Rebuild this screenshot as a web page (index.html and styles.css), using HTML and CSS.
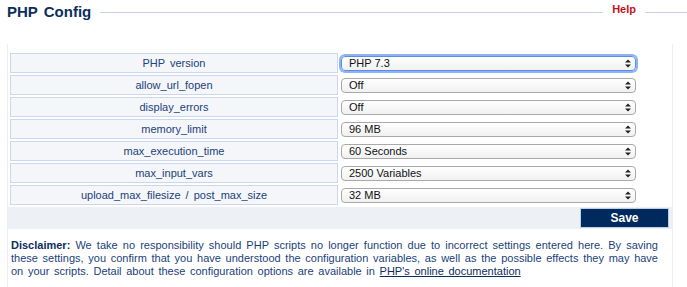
FILE: index.html
```html
<!DOCTYPE html>
<html lang="en">

<head>
    <meta charset="UTF-8">
    <meta name="viewport" content="width=device-width, initial-scale=1.0">
    <title>PHP Config</title>
    <link rel="stylesheet" href="styles.css">
</head>

<body>
    <!-- 상단 제목 -->
    <div class="page-head">
        <h1 class="page-title">PHP Config</h1>
        <span class="head-line"></span>
        <a class="help-link" href="#">Help</a>
        <span class="head-line head-line-end"></span>
    </div>

    <div class="config-box">
        <form class="config-form">
            <table class="config-table">
                <tr>
                    <td class="config-label">PHP version</td>
                    <td class="config-value">
                        <div class="select-wrap focused">
                            <select><option>PHP 7.3</option></select>
                            <svg class="select-arrow" width="6" height="9" viewBox="0 0 6 9"><path d="M0 3.5L3 0.5L6 3.5ZM0 5.5L3 8.5L6 5.5Z" fill="#222"/></svg>
                        </div>
                    </td>
                </tr>
                <tr>
                    <td class="config-label">allow_url_fopen</td>
                    <td class="config-value">
                        <div class="select-wrap">
                            <select><option>Off</option></select>
                            <svg class="select-arrow" width="6" height="9" viewBox="0 0 6 9"><path d="M0 3.5L3 0.5L6 3.5ZM0 5.5L3 8.5L6 5.5Z" fill="#222"/></svg>
                        </div>
                    </td>
                </tr>
                <tr>
                    <td class="config-label">display_errors</td>
                    <td class="config-value">
                        <div class="select-wrap">
                            <select><option>Off</option></select>
                            <svg class="select-arrow" width="6" height="9" viewBox="0 0 6 9"><path d="M0 3.5L3 0.5L6 3.5ZM0 5.5L3 8.5L6 5.5Z" fill="#222"/></svg>
                        </div>
                    </td>
                </tr>
                <tr>
                    <td class="config-label">memory_limit</td>
                    <td class="config-value">
                        <div class="select-wrap">
                            <select><option>96 MB</option></select>
                            <svg class="select-arrow" width="6" height="9" viewBox="0 0 6 9"><path d="M0 3.5L3 0.5L6 3.5ZM0 5.5L3 8.5L6 5.5Z" fill="#222"/></svg>
                        </div>
                    </td>
                </tr>
                <tr>
                    <td class="config-label">max_execution_time</td>
                    <td class="config-value">
                        <div class="select-wrap">
                            <select><option>60 Seconds</option></select>
                            <svg class="select-arrow" width="6" height="9" viewBox="0 0 6 9"><path d="M0 3.5L3 0.5L6 3.5ZM0 5.5L3 8.5L6 5.5Z" fill="#222"/></svg>
                        </div>
                    </td>
                </tr>
                <tr>
                    <td class="config-label">max_input_vars</td>
                    <td class="config-value">
                        <div class="select-wrap">
                            <select><option>2500 Variables</option></select>
                            <svg class="select-arrow" width="6" height="9" viewBox="0 0 6 9"><path d="M0 3.5L3 0.5L6 3.5ZM0 5.5L3 8.5L6 5.5Z" fill="#222"/></svg>
                        </div>
                    </td>
                </tr>
                <tr>
                    <td class="config-label">upload_max_filesize / post_max_size</td>
                    <td class="config-value">
                        <div class="select-wrap">
                            <select><option>32 MB</option></select>
                            <svg class="select-arrow" width="6" height="9" viewBox="0 0 6 9"><path d="M0 3.5L3 0.5L6 3.5ZM0 5.5L3 8.5L6 5.5Z" fill="#222"/></svg>
                        </div>
                    </td>
                </tr>
            </table>

            <!-- 저장 버튼 -->
            <div class="form-actions">
                <button type="button" class="save-button">Save</button>
            </div>
        </form>

        <p class="disclaimer">
            <strong>Disclaimer:</strong> We take no responsibility should PHP scripts no longer function due to incorrect settings entered here. By saving these settings, you confirm that you have understood the configuration variables, as well as the possible effects they may have on your scripts. Detail about these configuration options are available in <a href="#">PHP's online documentation</a>
        </p>
    </div>
</body>

</html>
```

FILE: styles.css
```css
body {
    margin: 0;
    padding: 0 0 0 7px;
    background-color: #ffffff;
    font-family: "Liberation Sans", Arial, sans-serif;
    color: #1d3d70;
}

/* 상단 제목 */
.page-head {
    display: flex;
    align-items: center;
    height: 24px;
}

.page-title {
    margin: 0;
    font-size: 15px;
    font-weight: bold;
    word-spacing: 2px;
    color: #0d2e5c;
    line-height: 24px;
}

.head-line {
    flex: 1;
    height: 1px;
    margin: 0 9px 0 9px;
    background-color: #c7cfea;
}

.head-line-end {
    flex: none;
    width: 42px;
    margin-right: 0;
}

.help-link {
    font-size: 11px;
    font-weight: bold;
    color: #c4101c;
    text-decoration: none;
    position: relative;
    top: -3px;
}

/* 설정 박스 */
.config-box {
    margin: 20px 14px 0 0;
    border-left: 1px solid #eceef2;
    border-right: 1px solid #eceef2;
    padding-top: 7px;
    padding-bottom: 10px;
}

.config-table {
    width: 100%;
    border-spacing: 2px;
    border-collapse: separate;
}

.config-table td {
    padding: 0;
    height: 18px;
}

.config-label {
    width: 326px;
    background-color: #f4f6f9;
    border: 1px solid #c9d8ea;
    text-align: center;
    font-size: 11px;
    line-height: 13px;
    word-spacing: 2px;
    color: #21427a;
}

.config-value {
    padding-left: 1px !important;
}

.select-wrap {
    position: relative;
    width: 295px;
    height: 15px;
}

.select-wrap select {
    -webkit-appearance: none;
    appearance: none;
    display: block;
    width: 100%;
    height: 15px;
    margin: 0;
    padding: 0 0 0 7px;
    border: 1px solid #a9a9a9;
    border-radius: 4px;
    background: linear-gradient(#ffffff, #f1f1f1);
    font-family: "Liberation Sans", Arial, sans-serif;
    font-size: 11px;
    color: #111111;
    line-height: 13px;
    outline: none;
}

.select-wrap.focused select {
    border-color: #5c8ee0;
    box-shadow: 0 0 0 2px #8cb4f4;
}

.select-arrow {
    position: absolute;
    right: 5px;
    top: 3px;
}

/* 저장 영역 */
.form-actions {
    display: flex;
    justify-content: flex-end;
    background-color: #edf1f6;
    margin-top: 0;
    padding: 1px 3px 1px 0;
}

.save-button {
    width: 89px;
    height: 20px;
    background-color: #002a5e;
    border: 1px solid #bcd0e8;
    color: #ffffff;
    font-family: "Liberation Sans", Arial, sans-serif;
    font-size: 12px;
    font-weight: bold;
    padding: 0;
    cursor: pointer;
}

/* 면책 조항 */
.disclaimer {
    margin: 10px 14px 0 3px;
    font-size: 11px;
    line-height: 13px;
    text-align: justify;
    word-spacing: 1.6px;
    color: #1b3f7a;
}

.disclaimer strong {
    color: #0d2e5c;
}

.disclaimer a {
    color: #0d2e5c;
}
```
